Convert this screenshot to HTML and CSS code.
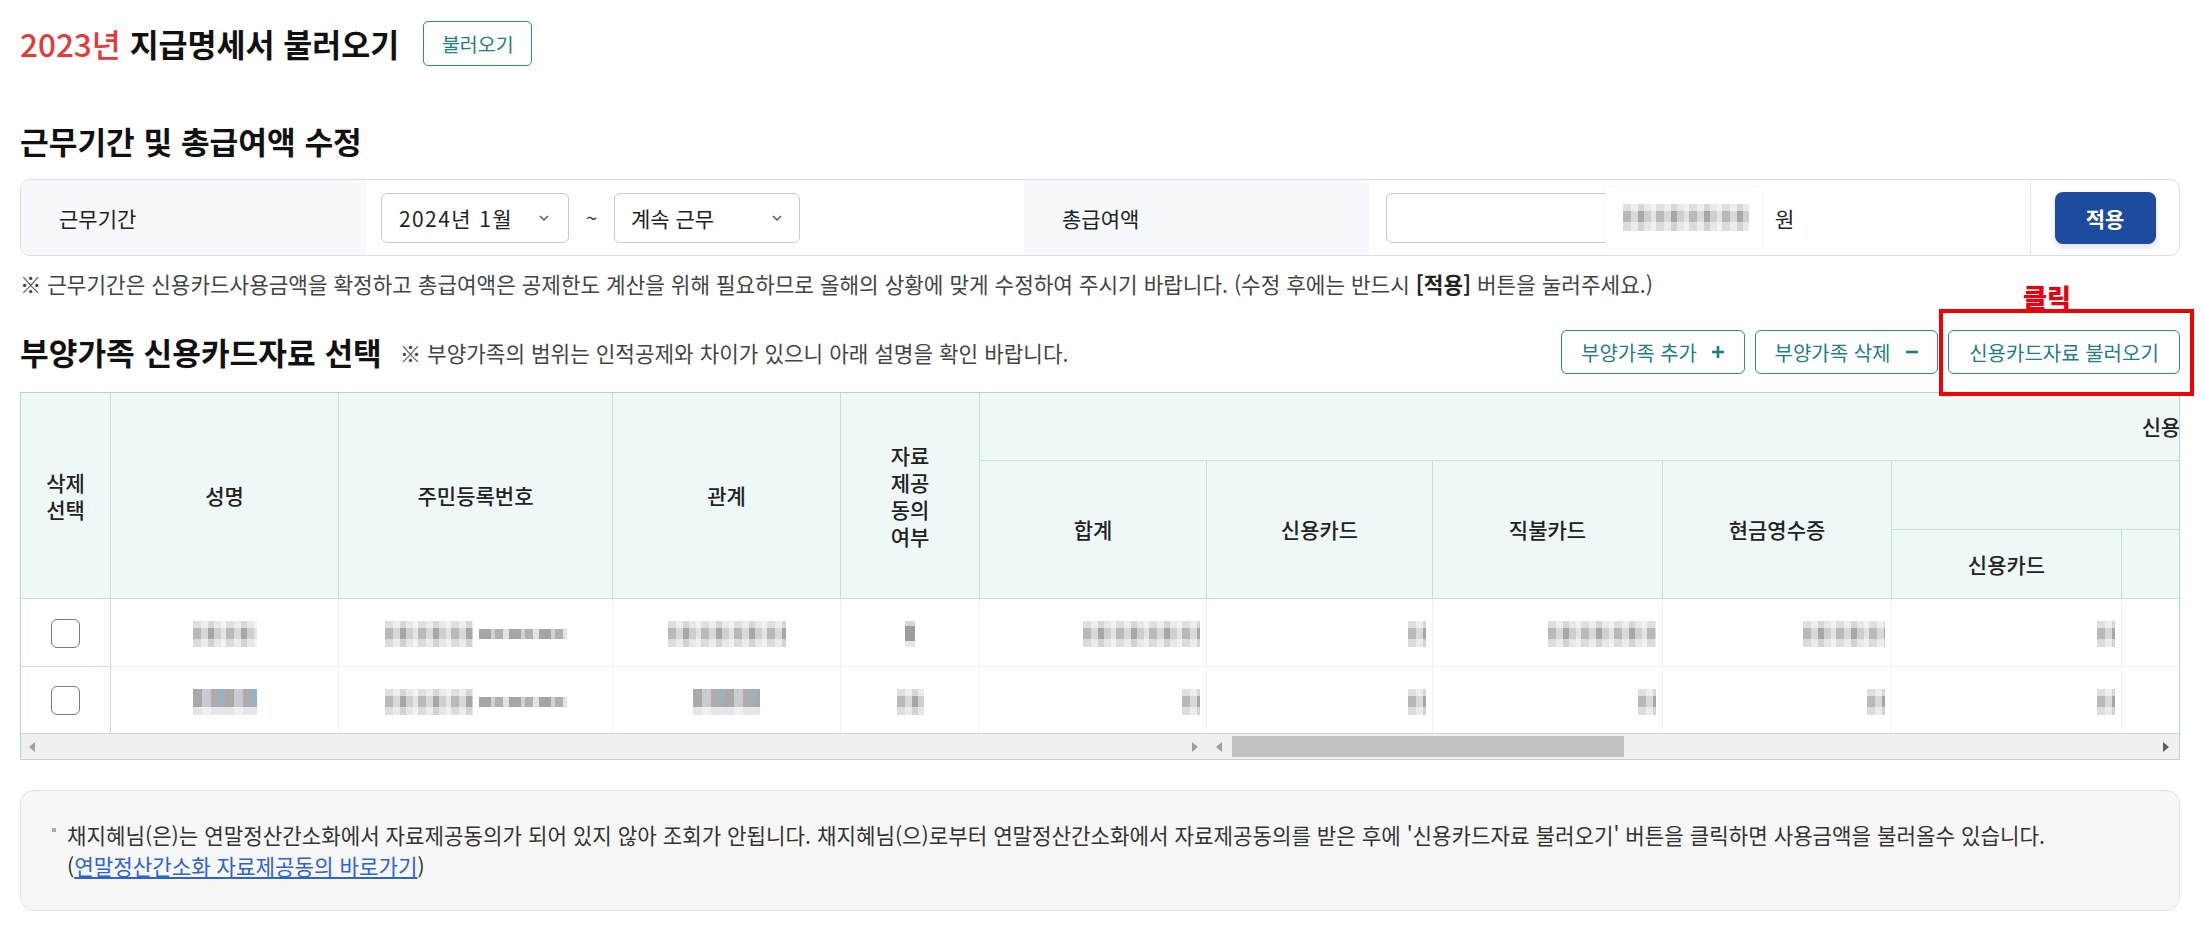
FILE: index.html
```html
<!DOCTYPE html>
<html lang="ko">
<head>
<meta charset="utf-8">
<title>지급명세서 불러오기</title>
<link rel="stylesheet" href="styles.css">
</head>
<body>
<div class="page">
  <div class="title-row">
    <h1 class="page-title"><span class="year">2023년</span> 지급명세서 불러오기</h1>
    <button class="btn-outline btn-load" type="button">불러오기</button>
  </div>

  <h2 class="section-title sec1">근무기간 및 총급여액 수정</h2>

  <div class="form-box">
    <div class="fb-label">근무기간</div>
    <div class="fb-field period">
      <div class="select s1"><span>2024년 1월</span><svg class="chev" viewBox="0 0 10 6" width="10" height="6"><path d="M1 1l4 4 4-4" fill="none" stroke="#555" stroke-width="1.4"/></svg></div>
      <span class="tilde">~</span>
      <div class="select s2"><span>계속 근무</span><svg class="chev" viewBox="0 0 10 6" width="10" height="6"><path d="M1 1l4 4 4-4" fill="none" stroke="#555" stroke-width="1.4"/></svg></div>
    </div>
    <div class="fb-label">총급여액</div>
    <div class="fb-field salary">
      <div class="amount-input">
        <span class="mosaic" aria-hidden="true"><span class="blob b-amount"></span></span>
      </div>
      <span class="unit">원</span>
    </div>
    <div class="fb-action"><button class="btn-apply" type="button">적용</button></div>
  </div>
  <p class="note">※ 근무기간은 신용카드사용금액을 확정하고 총급여액은 공제한도 계산을 위해 필요하므로 올해의 상황에 맞게 수정하여 주시기 바랍니다. (수정 후에는 반드시 <b>[적용]</b> 버튼을 눌러주세요.)</p>

  <div class="sec2-head">
    <h2 class="section-title">부양가족 신용카드자료 선택</h2>
    <span class="sub-note">※ 부양가족의 범위는 인적공제와 차이가 있으니 아래 설명을 확인 바랍니다.</span>
    <div class="actions">
      <button class="btn-outline act w1" type="button">부양가족 추가 <svg viewBox="0 0 14 14" width="14" height="14"><path d="M7 1v12M1 7h12" stroke="#1d7f81" stroke-width="2.6"/></svg></button>
      <button class="btn-outline act w2" type="button">부양가족 삭제 <svg viewBox="0 0 14 14" width="14" height="14"><path d="M1 7h12" stroke="#1d7f81" stroke-width="2.6"/></svg></button>
      <div class="highlight">
        <button class="btn-outline act w3" type="button">신용카드자료 불러오기</button>
        <span class="red-box" aria-hidden="true"></span>
        <span class="click-label">클릭</span>
      </div>
    </div>
  </div>

  <div class="grid-wrap">
    <div class="grid-clip">
      <table class="grid">
        <colgroup>
          <col class="c90"><col class="c228"><col class="c274"><col class="c228"><col class="c139">
          <col class="c227"><col class="c226"><col class="c230"><col class="c229"><col class="c230">
          <col class="c228"><col class="c228"><col class="c228"><col class="c228"><col class="c228"><col class="c228">
        </colgroup>
        <thead>
          <tr class="hr1">
            <th rowspan="3">삭제<br>선택</th>
            <th rowspan="3">성명</th>
            <th rowspan="3">주민등록번호</th>
            <th rowspan="3">관계</th>
            <th rowspan="3" class="stack">자료<br>제공<br>동의<br>여부</th>
            <th colspan="11">신용카드 등 사용금액</th>
          </tr>
          <tr class="hr2">
            <th rowspan="2">합계</th>
            <th rowspan="2">신용카드</th>
            <th rowspan="2">직불카드</th>
            <th rowspan="2">현금영수증</th>
            <th colspan="3">도서공연 등</th>
            <th rowspan="2">전통시장</th>
            <th rowspan="2">대중교통</th>
            <th rowspan="2">기타</th>
            <th rowspan="2">비고</th>
          </tr>
          <tr class="hr3">
            <th>신용카드</th>
            <th>직불카드</th>
            <th>현금영수증</th>
          </tr>
        </thead>
        <tbody>
          <tr class="dr1">
            <td class="sel"><input type="checkbox" class="chk" aria-label="삭제 선택"></td>
            <td class="ctr"><span class="blob w64"></span></td>
            <td class="ctr"><span class="blob w88"></span><span class="dash"></span></td>
            <td class="ctr"><span class="blob w118"></span></td>
            <td class="ctr"><span class="blob w18 thin"></span></td>
            <td class="num"><span class="blob w117"></span></td>
            <td class="num"><span class="blob w18"></span></td>
            <td class="num"><span class="blob w108"></span></td>
            <td class="num"><span class="blob w82"></span></td>
            <td class="num"><span class="blob w18"></span></td>
            <td></td><td></td><td></td><td></td><td></td><td></td>
          </tr>
          <tr class="dr2">
            <td class="sel"><input type="checkbox" class="chk" aria-label="삭제 선택"></td>
            <td class="ctr"><span class="blob w64 alt"></span></td>
            <td class="ctr"><span class="blob w88"></span><span class="dash"></span></td>
            <td class="ctr"><span class="blob w67 alt"></span></td>
            <td class="ctr"><span class="blob w27"></span></td>
            <td class="num"><span class="blob w18"></span></td>
            <td class="num"><span class="blob w18"></span></td>
            <td class="num"><span class="blob w18"></span></td>
            <td class="num"><span class="blob w18"></span></td>
            <td class="num"><span class="blob w18"></span></td>
            <td></td><td></td><td></td><td></td><td></td><td></td>
          </tr>
        </tbody>
      </table>
    </div>
    <div class="hscroll" aria-hidden="true">
      <div class="hs-seg hs-left"><span class="arr-l"></span><span class="arr-r"></span></div>
      <div class="hs-seg hs-right"><span class="arr-l"></span><span class="thumb"></span><span class="arr-r"></span></div>
    </div>
  </div>

  <div class="info-box">
    <ul class="info-list">
      <li>채지혜님(은)는 연말정산간소화에서 자료제공동의가 되어 있지 않아 조회가 안됩니다. 채지혜님(으)로부터 연말정산간소화에서 자료제공동의를 받은 후에 '신용카드자료 불러오기' 버튼을 클릭하면 사용금액을 불러올수 있습니다.<br>(<a href="#">연말정산간소화 자료제공동의 바로가기</a>)</li>
    </ul>
  </div>
</div>
</body>
</html>
```
FILE: styles.css
```css
* { box-sizing: border-box; }
html, body { margin: 0; padding: 0; background: #fff; }
body {
  font-family: "Noto Sans CJK KR", "Noto Sans", sans-serif;
  color: #222;
}
.page { width: 2205px; padding: 21px 25px 0 20px; }

/* title */
.title-row { display: flex; align-items: center; height: 45px; }
.page-title { margin: 0; font-size: 31.5px; font-weight: 700; color: #111; line-height: 45px; }
.year { color: #e53a3b; font-weight: 500; }
.btn-outline {
  font-family: inherit; background: #fff; color: #1d7f81;
  border: 1px solid #2b8b8d; border-radius: 5px; cursor: pointer; padding: 0;
}
.btn-load { margin-left: 24px; width: 109px; height: 45px; font-size: 19.5px; }

.section-title { margin: 0; font-size: 31.2px; font-weight: 700; color: #111; line-height: 40px; }
.sec1 { margin-top: 55px; }

/* form box */
.form-box {
  margin-top: 18px; height: 77px; display: flex; align-items: stretch;
  border: 1px solid #d8dde8; border-radius: 10px; overflow: hidden;
}
.fb-label {
  width: 345px; background: #f6f8fc; display: flex; align-items: center;
  padding-left: 38px; font-size: 21px; color: #222;
}
.fb-field { display: flex; align-items: center; }
.period { width: 658px; padding-left: 15px; }
.select {
  height: 50px; display: flex; align-items: center; justify-content: space-between;
  border: 1px solid #c9c9c9; border-radius: 6px; font-size: 21px; color: #222; background: #fff;
}
.s1 { width: 188px; padding: 0 19px 0 17px; }
.s1 span { letter-spacing: 1.4px; }
.s2 { width: 186px; padding: 0 17px 0 16px; }
.tilde { width: 45px; text-align: center; font-size: 20px; color: #333; }
.salary { width: 661px; padding-left: 17px; }
.amount-input {
  position: relative; width: 374px; height: 50px;
  border: 1px solid #c9c9c9; border-radius: 6px 0 0 6px; background: #fff;
}
.mosaic {
  position: absolute; right: -3px; top: -6px; bottom: -6px; width: 157px;
  background: #fff; box-shadow: 0 0 4px rgba(0,0,0,.06);
  display: flex; align-items: center; padding-left: 18px;
}
.unit { margin-left: 15px; font-size: 21px; color: #222; }
.fb-action {
  flex: 1; border-left: 1px solid #e3e6ee; display: flex; align-items: center; justify-content: center;
}
.btn-apply {
  width: 101px; height: 52px; border: 0; border-radius: 8px; background: #1c4b9e;
  color: #fff; font-family: inherit; font-size: 21px; font-weight: 700;
  box-shadow: 0 3px 6px rgba(28,75,158,.18); cursor: pointer;
}

.note { margin: 14px 0 0; font-size: 21.3px; line-height: 28px; color: #444; }
.note b { color: #222; }

/* section 2 */
.sec2-head { margin-top: 32px; height: 44px; display: flex; align-items: center; }
.sub-note { margin-left: 18px; font-size: 21.3px; color: #444; }
.actions { margin-left: auto; display: flex; gap: 10px; }
.act {
  height: 44px; font-size: 20px; border-radius: 6px;
  display: inline-flex; align-items: center; justify-content: center; gap: 14px;
}
.w1 { width: 184px; }
.w2 { width: 183px; }
.w3 { width: 232px; }
.highlight { position: relative; }
.red-box {
  position: absolute; left: -9px; top: -21px; right: -14px; bottom: -22px;
  border: 4px solid #f40000; pointer-events: none;
}
.click-label {
  position: absolute; left: 75px; bottom: calc(100% + 18px);
  font-size: 26px; line-height: 30px; font-weight: 900; color: #e8000e; white-space: nowrap;
}

/* grid */
.grid-wrap { margin-top: 18px; width: 2160px; border: 1px solid #b6d4d4; }
.grid-clip { overflow: hidden; }
.grid { border-collapse: separate; border-spacing: 0; table-layout: fixed; width: 3469px; }
.c90 { width: 90px; } .c228 { width: 228px; } .c274 { width: 274px; } .c139 { width: 139px; }
.c227 { width: 227px; } .c226 { width: 226px; } .c230 { width: 230px; } .c229 { width: 229px; }
.grid th {
  background: #eef8f7; font-weight: 500; font-size: 21px; color: #222; line-height: 27px;
  border-right: 1px solid #c6dfdf; border-bottom: 1px solid #c6dfdf; padding: 0; text-align: center;
  vertical-align: middle;
}
.hr1 { height: 68px; }
.hr2 { height: 69px; }
.hr3 { height: 69px; }
.dr1 { height: 68px; }
.dr2 { height: 66px; }
.grid td {
  padding: 0; border-right: 1px solid #edf3f4; border-bottom: 1px solid #edf3f4;
  vertical-align: middle; font-size: 18px;
}
.dr2 td { border-bottom: 0; }
.grid td.sel { text-align: center; border-right-color: #c6dfdf; }
.dr1 td.sel { border-bottom-color: #c6dfdf; }
.grid td.ctr { text-align: center; }
.grid td.num { text-align: right; padding-right: 6px; }
.chk {
  appearance: none; -webkit-appearance: none; margin: 0; width: 29px; height: 29px;
  border: 1.5px solid #7a7a7a; border-radius: 6px; background: #fff; vertical-align: middle;
}

.blob {
  display: inline-block; height: 26px; vertical-align: middle;
  background:
    linear-gradient(180deg, rgba(255,255,255,.55) 0 7px, rgba(255,255,255,0) 7px 18px, rgba(255,255,255,.5) 18px),
    repeating-linear-gradient(90deg, #b9b9b9 0 8px, #d9d9d9 8px 15px, #a7a7a7 15px 21px, #cfcfcf 21px 28px, #e4e4e4 28px 33px);
  filter: blur(0.7px);
}
.blob.alt {
  background:
    linear-gradient(180deg, rgba(255,255,255,0) 0 18px, rgba(255,255,255,.7) 18px),
    repeating-linear-gradient(90deg, #a9a9a9 0 9px, #c8ccd0 9px 18px, #b3aaaa 18px 24px, #9fb0bb 24px 32px);
}
.blob.thin { background: linear-gradient(180deg, #d8d8d8 0 5px, #9d9d9d 5px 20px, #e6e6e6 20px); width: 10px; }
.w18 { width: 18px; } .w27 { width: 27px; } .w64 { width: 64px; } .w67 { width: 67px; }
.w82 { width: 82px; } .w88 { width: 88px; } .w108 { width: 108px; } .w117 { width: 117px; } .w118 { width: 118px; }
.b-amount { width: 126px; height: 27px; }
.dash {
  display: inline-block; width: 88px; height: 10px; margin-left: 6px; vertical-align: middle;
  background: repeating-linear-gradient(90deg, #a5a5a5 0 12px, #d2d2d2 12px 16px, #b0b0b0 16px 24px, #e2e2e2 24px 30px);
  filter: blur(0.5px);
}

.hscroll { display: flex; height: 26px; border-top: 1px solid #c6dcdc; background: #f0f0f0; }
.hs-seg { display: flex; align-items: center; }
.hs-left { width: 1186px; padding: 0 9px 0 8px; justify-content: space-between; }
.hs-right { flex: 1; padding: 0 10px 0 9px; }
.arr-l, .arr-r { width: 0; height: 0; border-top: 5px solid transparent; border-bottom: 5px solid transparent; }
.arr-l { border-right: 6px solid #a0a0a0; }
.arr-r { border-left: 6px solid #a0a0a0; }
.hs-right .arr-r { margin-left: auto; border-left-color: #606060; }
.thumb { margin-left: 10px; width: 392px; height: 21px; background: #c1c1c1; }

/* info */
.info-box {
  margin-top: 30px; height: 121px; background: #f7f7f7; border: 1px solid #e1e1e1;
  border-radius: 14px; padding: 28px 20px 0 46px;
}
.info-list { margin: 0; padding: 0; list-style: none; }
.info-list li { position: relative; font-size: 21.2px; line-height: 31px; color: #333; }
.info-list li::before {
  content: ""; position: absolute; left: -15px; top: 9px; width: 4px; height: 4px; background: #aaa;
}
.info-list a { color: #2c63d6; text-decoration: underline; }
```
